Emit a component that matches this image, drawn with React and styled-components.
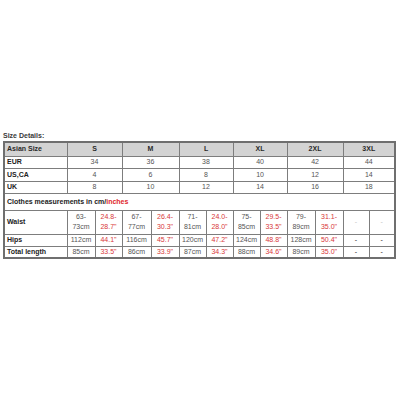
import React from "react";
import styled, { createGlobalStyle } from "styled-components";

const GlobalStyle = createGlobalStyle`
  body {
    margin: 0;
    background: #ffffff;
    font-family: "Liberation Sans", Arial, sans-serif;
  }
`;

const sizes = ["S", "M", "L", "XL", "2XL", "3XL"];
const colWidths = [63, 28, 27, 29, 28, 27, 27, 27, 27, 28, 28, 26, 26];

const sizeRows = [
  { label: "EUR", values: [34, 36, 38, 40, 42, 44], h: 12 },
  { label: "US,CA", values: [4, 6, 8, 10, 12, 14], h: 13 },
  { label: "UK", values: [8, 10, 12, 14, 16, 18], h: 12 },
];

const measureRows = [
  {
    label: "Waist",
    h: 24,
    values: [
      ["63-", "73cm"], ["24.8-", "28.7\""],
      ["67-", "77cm"], ["26.4-", "30.3\""],
      ["71-", "81cm"], ["24.0-", "28.0\""],
      ["75-", "85cm"], ["29.5-", "33.5\""],
      ["79-", "89cm"], ["31.1-", "35.0\""],
    ],
    faint: true,
  },
  {
    label: "Hips",
    h: 12,
    values: ["112cm", "44.1\"", "116cm", "45.7\"", "120cm", "47.2\"", "124cm", "48.8\"", "128cm", "50.4\""],
  },
  {
    label: "Total length",
    h: 12,
    values: ["85cm", "33.5\"", "86cm", "33.9\"", "87cm", "34.3\"", "88cm", "34.6\"", "89cm", "35.0\""],
  },
];

const App = () => {
  return (
    <Page>
      <GlobalStyle />
      <Title>Size Details:</Title>
      <Table>
        <colgroup>
          {colWidths.map((w, i) => (
            <col key={i} style={{ width: w }} />
          ))}
        </colgroup>
        <tbody>
          <Row $h={14}>
            <HeadCell>Asian Size</HeadCell>
            {sizes.map((s) => (
              <HeadCell key={s} colSpan={2} $center>
                {s}
              </HeadCell>
            ))}
          </Row>
          {sizeRows.map((r) => (
            <Row key={r.label} $h={r.h}>
              <LabelCell>{r.label}</LabelCell>
              {r.values.map((v, i) => (
                <Cell key={i} colSpan={2}>
                  {v}
                </Cell>
              ))}
            </Row>
          ))}
          <Row $h={17}>
            <LabelCell colSpan={13}>
              Clothes measurements in cm/<Red>inches</Red>
            </LabelCell>
          </Row>
          {measureRows.map((r) => (
            <Row key={r.label} $h={r.h}>
              <LabelCell>{r.label}</LabelCell>
              {r.values.map((v, i) => (
                <Cell key={i} $red={i % 2 === 1}>
                  {Array.isArray(v) ? (
                    <>
                      {v[0]}
                      <br />
                      {v[1]}
                    </>
                  ) : (
                    v
                  )}
                </Cell>
              ))}
              <Cell $dash $faint={r.faint}>-</Cell>
              <Cell $dash $faint={r.faint}>-</Cell>
            </Row>
          ))}
        </tbody>
      </Table>
    </Page>
  );
};

const Page = styled.div`
  padding: 131px 6px 0 3px;
  width: 391px;
`;

const Title = styled.div`
  font-size: 7px;
  line-height: 10px;
  font-weight: bold;
  color: #3a3a3a;
`;

const Table = styled.table`
  width: 391px;
  table-layout: fixed;
  border-collapse: collapse;
  border: 2px solid #6f6f6f;
  font-size: 7px;
`;

const Row = styled.tr`
  height: ${(p) => p.$h}px;
`;

const BaseCell = styled.td`
  border: 1px solid #7d7d7d;
  padding: 0 2px;
  line-height: 10px;
  vertical-align: middle;
  overflow: hidden;
  white-space: nowrap;
`;

const HeadCell = styled(BaseCell)`
  background: #d3d3d3;
  font-weight: bold;
  color: #2a2a2a;
  text-align: ${(p) => (p.$center ? "center" : "left")};
`;

const LabelCell = styled(BaseCell)`
  font-weight: bold;
  color: #222222;
  text-align: left;
`;

const Cell = styled(BaseCell)`
  text-align: center;
  padding: 0;
  color: ${(p) => (p.$red ? "#d8383a" : p.$faint ? "#c4c4c4" : p.$dash ? "#222" : "#555555")};
`;

const Red = styled.span`
  color: #e0262a;
`;

export default App;
